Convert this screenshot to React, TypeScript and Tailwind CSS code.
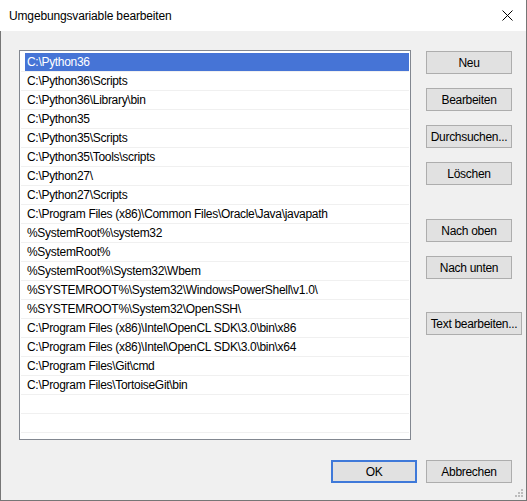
import React from 'react';

const paths: string[] = [
  'C:\\Python36',
  'C:\\Python36\\Scripts',
  'C:\\Python36\\Library\\bin',
  'C:\\Python35',
  'C:\\Python35\\Scripts',
  'C:\\Python35\\Tools\\scripts',
  'C:\\Python27\\',
  'C:\\Python27\\Scripts',
  'C:\\Program Files (x86)\\Common Files\\Oracle\\Java\\javapath',
  '%SystemRoot%\\system32',
  '%SystemRoot%',
  '%SystemRoot%\\System32\\Wbem',
  '%SYSTEMROOT%\\System32\\WindowsPowerShell\\v1.0\\',
  '%SYSTEMROOT%\\System32\\OpenSSH\\',
  'C:\\Program Files (x86)\\Intel\\OpenCL SDK\\3.0\\bin\\x86',
  'C:\\Program Files (x86)\\Intel\\OpenCL SDK\\3.0\\bin\\x64',
  'C:\\Program Files\\Git\\cmd',
  'C:\\Program Files\\TortoiseGit\\bin',
  '',
  '',
];

interface BtnProps {
  label: string;
  className?: string;
  primary?: boolean;
  wide?: boolean;
}

const Btn: React.FC<BtnProps> = ({ label, className = '', primary, wide }) => (
  <button
    className={`${wide ? 'w-[96px]' : 'w-[86px]'} shrink-0 h-[23px] flex items-center justify-center bg-[#e1e1e1] text-black text-[12px] leading-none whitespace-nowrap tracking-[-0.3px] ${
      primary ? 'border-2 border-[#3f79d9]' : 'border border-[#adadad]'
    } ${className}`}
  >
    {label}
  </button>
);

const App: React.FC = () => {
  return (
    <div
      className="w-[527px] h-[501px] flex flex-col border-r border-[#767676] bg-white select-none"
      style={{ fontFamily: '"Liberation Sans", Arial, sans-serif' }}
    >
      {/* title bar */}
      <div className="h-[31px] flex items-center justify-between bg-white pl-[9px] pr-[13px]">
        <span className="text-[12px] text-black tracking-[-0.15px] pt-[1px]">Umgebungsvariable bearbeiten</span>
        <svg width="11" height="11" viewBox="0 0 11 11" className="text-black">
          <path d="M0.5 0.5 L10.5 10.5 M10.5 0.5 L0.5 10.5" stroke="currentColor" strokeWidth="1" fill="none" />
        </svg>
      </div>

      {/* body */}
      <div className="relative flex-1 bg-[#f0f0f0] border-l border-b border-[#767676] pt-[19px] pl-[18px]">
        <div className="flex">
          {/* list */}
          <div className="w-[392px] h-[390px] shrink-0 border border-[#828790] bg-white px-[1px] pt-[2px] overflow-hidden">
            {paths.map((p, i) => (
              <div key={i} className="h-[19px] border-b border-[#f0f0f0] flex">
                <div
                  className={`ml-[4px] flex-1 h-[18px] text-[12px] leading-[18px] pl-[2px] whitespace-nowrap tracking-[-0.3px] ${
                    i === 0 ? 'bg-[#4674d6] text-white' : 'text-black'
                  }`}
                >
                  {p}
                </div>
              </div>
            ))}
          </div>

          {/* side buttons */}
          <div className="ml-[15px] flex flex-col items-start pt-[1px]">
            <Btn label="Neu" />
            <Btn label="Bearbeiten" className="mt-[14px]" />
            <Btn label="Durchsuchen..." className="mt-[14px]" />
            <Btn label="Löschen" className="mt-[14px]" />
            <Btn label="Nach oben" className="mt-[34px]" />
            <Btn label="Nach unten" className="mt-[14px]" />
            <Btn label="Text bearbeiten..." wide className="mt-[33px]" />
          </div>
        </div>

        {/* footer buttons */}
        <div className="w-[493px] mt-[20px] flex justify-end gap-[9px]">
          <Btn label="OK" primary />
          <Btn label="Abbrechen" />
        </div>

        {/* resize grip */}
        <svg width="10" height="10" viewBox="0 0 10 10" className="absolute right-[2px] bottom-[2px]">
          <rect x="7" y="1" width="2" height="2" fill="#bcbcbc" />
          <rect x="4" y="4" width="2" height="2" fill="#bcbcbc" />
          <rect x="7" y="4" width="2" height="2" fill="#bcbcbc" />
          <rect x="1" y="7" width="2" height="2" fill="#bcbcbc" />
          <rect x="4" y="7" width="2" height="2" fill="#bcbcbc" />
          <rect x="7" y="7" width="2" height="2" fill="#bcbcbc" />
        </svg>
      </div>
    </div>
  );
};

export default App;
